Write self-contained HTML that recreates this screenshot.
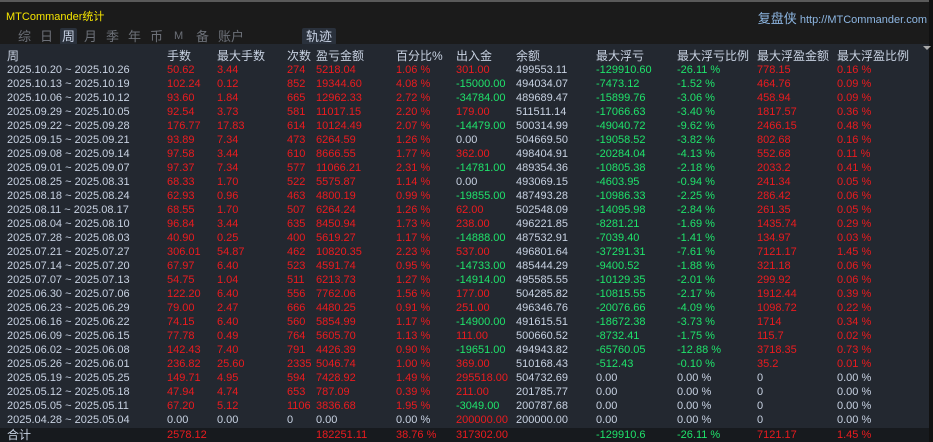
<!DOCTYPE html>
<html><head><meta charset="utf-8"><style>
*{margin:0;padding:0;box-sizing:border-box}
body{width:933px;height:442px;overflow:hidden;background:#1c1c1c;font-family:"Liberation Sans","Noto Sans CJK SC",sans-serif;position:relative}
.top{position:absolute;left:0;top:0;width:933px;height:44px;background:#1b1b1b;border-top:2px solid #5a5a5a}
.title{position:absolute;left:6px;top:6px;color:#f5e400;font-size:11px}
.site{position:absolute;right:6px;top:6px;color:#8db6e2;font-size:11px}
.site span{font-size:13px}
.tab{position:absolute;top:26px;color:#6c7078;font-size:13px;line-height:17px}
.tab.on{color:#c8d2e4;background:#2a313c;padding:0 2px;border-radius:2px}
.main{position:absolute;left:0;top:44px;width:929px;height:384px;background:#232830}
.rb{position:absolute;left:929px;top:0;width:4px;height:442px;background:#111}
table{position:absolute;left:7px;top:49px;border-collapse:collapse;table-layout:fixed;font-size:11px}
td{padding:0;height:14px;line-height:14px;white-space:nowrap;color:#c8d2e2;overflow:visible}
tr.h td{font-size:12px;color:#c8d2e2}
.r{color:#ec1b1f}.g{color:#1fe36b}
.tot{position:absolute;left:0;top:428px;width:929px;height:14px;background:#171a1e}
table.t{top:428px}
</style></head><body>
<div class="top">
<div class="title">MTCommander统计</div>
<div class="site"><span>复盘侠</span> http://MTCommander.com</div>
<div class="tab" style="left:18px">综</div>
<div class="tab" style="left:40px">日</div>
<div class="tab on" style="left:60px">周</div>
<div class="tab" style="left:84px">月</div>
<div class="tab" style="left:106px">季</div>
<div class="tab" style="left:128px">年</div>
<div class="tab" style="left:150px">币</div>
<div class="tab" style="left:174px;font-size:11px">M</div>
<div class="tab" style="left:196px">备</div>
<div class="tab" style="left:218px">账户</div>
<div class="tab on" style="left:302px;padding:0 4px">轨迹</div>
</div>
<div class="main"></div>
<div class="tot"></div>
<div class="rb"></div>
<div style="position:absolute;left:923px;top:46px;width:0;height:0;border-left:4px solid transparent;border-right:4px solid transparent;border-top:4px solid #aaa"></div>
<table>
<colgroup><col style="width:160px"><col style="width:50px"><col style="width:70px"><col style="width:29px"><col style="width:80px"><col style="width:60px"><col style="width:60px"><col style="width:80px"><col style="width:81px"><col style="width:80px"><col style="width:80px"><col style="width:96px"></colgroup>
<tr class="h"><td>周</td><td>手数</td><td>最大手数</td><td>次数</td><td>盈亏金额</td><td>百分比%</td><td>出入金</td><td>余额</td><td>最大浮亏</td><td>最大浮亏比例</td><td>最大浮盈金额</td><td>最大浮盈比例</td></tr>
<tr><td>2025.10.20 ~ 2025.10.26</td><td class="r">50.62</td><td class="r">3.44</td><td class="r">274</td><td class="r">5218.04</td><td class="r">1.06 %</td><td class="r">301.00</td><td>499553.11</td><td class="g">-129910.60</td><td class="g">-26.11 %</td><td class="r">778.15</td><td class="r">0.16 %</td></tr>
<tr><td>2025.10.13 ~ 2025.10.19</td><td class="r">102.24</td><td class="r">0.12</td><td class="r">852</td><td class="r">19344.60</td><td class="r">4.08 %</td><td class="g">-15000.00</td><td>494034.07</td><td class="g">-7473.12</td><td class="g">-1.52 %</td><td class="r">464.76</td><td class="r">0.09 %</td></tr>
<tr><td>2025.10.06 ~ 2025.10.12</td><td class="r">93.60</td><td class="r">1.84</td><td class="r">665</td><td class="r">12962.33</td><td class="r">2.72 %</td><td class="g">-34784.00</td><td>489689.47</td><td class="g">-15899.76</td><td class="g">-3.06 %</td><td class="r">458.94</td><td class="r">0.09 %</td></tr>
<tr><td>2025.09.29 ~ 2025.10.05</td><td class="r">92.54</td><td class="r">3.73</td><td class="r">581</td><td class="r">11017.15</td><td class="r">2.20 %</td><td class="r">179.00</td><td>511511.14</td><td class="g">-17066.63</td><td class="g">-3.40 %</td><td class="r">1817.57</td><td class="r">0.36 %</td></tr>
<tr><td>2025.09.22 ~ 2025.09.28</td><td class="r">176.77</td><td class="r">17.83</td><td class="r">614</td><td class="r">10124.49</td><td class="r">2.07 %</td><td class="g">-14479.00</td><td>500314.99</td><td class="g">-49040.72</td><td class="g">-9.62 %</td><td class="r">2466.15</td><td class="r">0.48 %</td></tr>
<tr><td>2025.09.15 ~ 2025.09.21</td><td class="r">93.89</td><td class="r">7.34</td><td class="r">473</td><td class="r">6264.59</td><td class="r">1.26 %</td><td>0.00</td><td>504669.50</td><td class="g">-19058.52</td><td class="g">-3.82 %</td><td class="r">802.68</td><td class="r">0.16 %</td></tr>
<tr><td>2025.09.08 ~ 2025.09.14</td><td class="r">97.58</td><td class="r">3.44</td><td class="r">610</td><td class="r">8666.55</td><td class="r">1.77 %</td><td class="r">362.00</td><td>498404.91</td><td class="g">-20284.04</td><td class="g">-4.13 %</td><td class="r">552.68</td><td class="r">0.11 %</td></tr>
<tr><td>2025.09.01 ~ 2025.09.07</td><td class="r">97.37</td><td class="r">7.34</td><td class="r">577</td><td class="r">11066.21</td><td class="r">2.31 %</td><td class="g">-14781.00</td><td>489354.36</td><td class="g">-10805.38</td><td class="g">-2.18 %</td><td class="r">2033.2</td><td class="r">0.41 %</td></tr>
<tr><td>2025.08.25 ~ 2025.08.31</td><td class="r">68.33</td><td class="r">1.70</td><td class="r">522</td><td class="r">5575.87</td><td class="r">1.14 %</td><td>0.00</td><td>493069.15</td><td class="g">-4603.95</td><td class="g">-0.94 %</td><td class="r">241.34</td><td class="r">0.05 %</td></tr>
<tr><td>2025.08.18 ~ 2025.08.24</td><td class="r">62.93</td><td class="r">0.96</td><td class="r">463</td><td class="r">4800.19</td><td class="r">0.99 %</td><td class="g">-19855.00</td><td>487493.28</td><td class="g">-10986.33</td><td class="g">-2.25 %</td><td class="r">286.42</td><td class="r">0.06 %</td></tr>
<tr><td>2025.08.11 ~ 2025.08.17</td><td class="r">68.55</td><td class="r">1.70</td><td class="r">507</td><td class="r">6264.24</td><td class="r">1.26 %</td><td class="r">62.00</td><td>502548.09</td><td class="g">-14095.98</td><td class="g">-2.84 %</td><td class="r">261.35</td><td class="r">0.05 %</td></tr>
<tr><td>2025.08.04 ~ 2025.08.10</td><td class="r">96.84</td><td class="r">3.44</td><td class="r">635</td><td class="r">8450.94</td><td class="r">1.73 %</td><td class="r">238.00</td><td>496221.85</td><td class="g">-8281.21</td><td class="g">-1.69 %</td><td class="r">1435.74</td><td class="r">0.29 %</td></tr>
<tr><td>2025.07.28 ~ 2025.08.03</td><td class="r">40.90</td><td class="r">0.25</td><td class="r">400</td><td class="r">5619.27</td><td class="r">1.17 %</td><td class="g">-14888.00</td><td>487532.91</td><td class="g">-7039.40</td><td class="g">-1.41 %</td><td class="r">134.97</td><td class="r">0.03 %</td></tr>
<tr><td>2025.07.21 ~ 2025.07.27</td><td class="r">306.01</td><td class="r">54.87</td><td class="r">462</td><td class="r">10820.35</td><td class="r">2.23 %</td><td class="r">537.00</td><td>496801.64</td><td class="g">-37291.31</td><td class="g">-7.61 %</td><td class="r">7121.17</td><td class="r">1.45 %</td></tr>
<tr><td>2025.07.14 ~ 2025.07.20</td><td class="r">67.97</td><td class="r">6.40</td><td class="r">523</td><td class="r">4591.74</td><td class="r">0.95 %</td><td class="g">-14733.00</td><td>485444.29</td><td class="g">-9400.52</td><td class="g">-1.88 %</td><td class="r">321.18</td><td class="r">0.06 %</td></tr>
<tr><td>2025.07.07 ~ 2025.07.13</td><td class="r">54.75</td><td class="r">1.04</td><td class="r">511</td><td class="r">6213.73</td><td class="r">1.27 %</td><td class="g">-14914.00</td><td>495585.55</td><td class="g">-10129.35</td><td class="g">-2.01 %</td><td class="r">299.92</td><td class="r">0.06 %</td></tr>
<tr><td>2025.06.30 ~ 2025.07.06</td><td class="r">122.20</td><td class="r">6.40</td><td class="r">556</td><td class="r">7762.06</td><td class="r">1.56 %</td><td class="r">177.00</td><td>504285.82</td><td class="g">-10815.55</td><td class="g">-2.17 %</td><td class="r">1912.44</td><td class="r">0.39 %</td></tr>
<tr><td>2025.06.23 ~ 2025.06.29</td><td class="r">79.00</td><td class="r">2.47</td><td class="r">666</td><td class="r">4480.25</td><td class="r">0.91 %</td><td class="r">251.00</td><td>496346.76</td><td class="g">-20076.66</td><td class="g">-4.09 %</td><td class="r">1098.72</td><td class="r">0.22 %</td></tr>
<tr><td>2025.06.16 ~ 2025.06.22</td><td class="r">74.15</td><td class="r">6.40</td><td class="r">560</td><td class="r">5854.99</td><td class="r">1.17 %</td><td class="g">-14900.00</td><td>491615.51</td><td class="g">-18672.38</td><td class="g">-3.73 %</td><td class="r">1714</td><td class="r">0.34 %</td></tr>
<tr><td>2025.06.09 ~ 2025.06.15</td><td class="r">77.78</td><td class="r">0.49</td><td class="r">764</td><td class="r">5605.70</td><td class="r">1.13 %</td><td class="r">111.00</td><td>500660.52</td><td class="g">-8732.41</td><td class="g">-1.75 %</td><td class="r">115.7</td><td class="r">0.02 %</td></tr>
<tr><td>2025.06.02 ~ 2025.06.08</td><td class="r">142.43</td><td class="r">7.40</td><td class="r">791</td><td class="r">4426.39</td><td class="r">0.90 %</td><td class="g">-19651.00</td><td>494943.82</td><td class="g">-65760.05</td><td class="g">-12.88 %</td><td class="r">3718.35</td><td class="r">0.73 %</td></tr>
<tr><td>2025.05.26 ~ 2025.06.01</td><td class="r">236.82</td><td class="r">25.60</td><td class="r">2335</td><td class="r">5046.74</td><td class="r">1.00 %</td><td class="r">369.00</td><td>510168.43</td><td class="g">-512.43</td><td class="g">-0.10 %</td><td class="r">35.2</td><td class="r">0.01 %</td></tr>
<tr><td>2025.05.19 ~ 2025.05.25</td><td class="r">149.71</td><td class="r">4.95</td><td class="r">594</td><td class="r">7428.92</td><td class="r">1.49 %</td><td class="r">295518.00</td><td>504732.69</td><td>0.00</td><td>0.00 %</td><td>0</td><td>0.00 %</td></tr>
<tr><td>2025.05.12 ~ 2025.05.18</td><td class="r">47.94</td><td class="r">4.74</td><td class="r">653</td><td class="r">787.09</td><td class="r">0.39 %</td><td class="r">211.00</td><td>201785.77</td><td>0.00</td><td>0.00 %</td><td>0</td><td>0.00 %</td></tr>
<tr><td>2025.05.05 ~ 2025.05.11</td><td class="r">67.20</td><td class="r">5.12</td><td class="r">1106</td><td class="r">3836.68</td><td class="r">1.95 %</td><td class="g">-3049.00</td><td>200787.68</td><td>0.00</td><td>0.00 %</td><td>0</td><td>0.00 %</td></tr>
<tr><td>2025.04.28 ~ 2025.05.04</td><td>0.00</td><td>0.00</td><td>0</td><td>0.00</td><td>0.00 %</td><td class="r">200000.00</td><td>200000.00</td><td>0.00</td><td>0.00 %</td><td>0</td><td>0.00 %</td></tr>
</table>
<table class="t">
<colgroup><col style="width:160px"><col style="width:50px"><col style="width:70px"><col style="width:29px"><col style="width:80px"><col style="width:60px"><col style="width:60px"><col style="width:80px"><col style="width:81px"><col style="width:80px"><col style="width:80px"><col style="width:96px"></colgroup>
<tr><td style="font-size:12px">合计</td><td class="r">2578.12</td><td></td><td></td><td class="r">182251.11</td><td class="r">38.76 %</td><td class="r">317302.00</td><td></td><td class="g">-129910.6</td><td class="g">-26.11 %</td><td class="r">7121.17</td><td class="r">1.45 %</td></tr>
</table>
</body></html>
